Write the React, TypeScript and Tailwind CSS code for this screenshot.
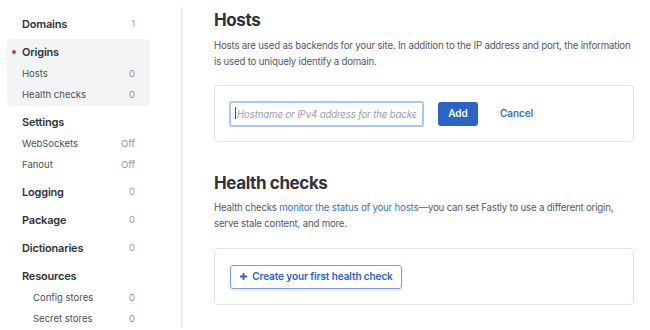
import React from 'react'

type Item = { label: string; value?: string; indent?: boolean }
type Group = { title: string; value?: string; active?: boolean; items?: Item[] }

const groups: Group[] = [
  { title: 'Domains', value: '1' },
  {
    title: 'Origins',
    active: true,
    items: [
      { label: 'Hosts', value: '0' },
      { label: 'Health checks', value: '0' },
    ],
  },
  {
    title: 'Settings',
    items: [
      { label: 'WebSockets', value: 'Off' },
      { label: 'Fanout', value: 'Off' },
    ],
  },
  { title: 'Logging', value: '0' },
  { title: 'Package', value: '0' },
  { title: 'Dictionaries', value: '0' },
  {
    title: 'Resources',
    items: [
      { label: 'Config stores', value: '0', indent: true },
      { label: 'Secret stores', value: '0', indent: true },
    ],
  },
]

function Sidebar() {
  return (
    <nav className="flex w-[181px] shrink-0 flex-col gap-[4px] pl-[7px] pr-[31px] pt-[12px]">
      {groups.map((g) => (
        <div key={g.title} className={`rounded-[4px] ${g.active ? '-mt-[1px] bg-[#f3f4f6] pt-[1px]' : ''}`}>
          <div className="relative flex h-[24px] items-center justify-between px-[15px]">
            {g.active && (
              <span className="absolute left-[5px] top-[10px] h-[4px] w-[4px] rounded-full bg-[#e5322d]" />
            )}
            <span className="text-[11px] font-semibold tracking-[-0.2px] text-[#2f343b]">{g.title}</span>
            {g.value && <span className="text-[9.5px] text-[#9aa0a6]">{g.value}</span>}
          </div>
          {g.items?.map((it) => (
            <div
              key={it.label}
              className={`flex h-[21px] items-center justify-between pr-[15px] ${it.indent ? 'pl-[26px]' : 'pl-[15px]'}`}
            >
              <span className="text-[9.5px] text-[#4b5158]">{it.label}</span>
              <span className="text-[9.5px] text-[#8d939a]">{it.value}</span>
            </div>
          ))}
        </div>
      ))}
    </nav>
  )
}

export default function App() {
  return (
    <div
      className="flex h-[330px] w-[650px] overflow-hidden bg-white"
      style={{ fontFamily: 'Inter, "Noto Sans", sans-serif' }}
    >
      <Sidebar />
      <div className="mb-[2px] mt-[7px] w-[2px] shrink-0 bg-[#eceef1]" />
      <main className="flex-1 pl-[31px] pr-[16px] pt-[8px]">
        <h2 className="text-[17px] font-bold leading-[24px] tracking-[-0.4px] text-[#2f343b]">Hosts</h2>
        <p className="mt-[6px] text-[9.7px] leading-[16px] tracking-[-0.2px] text-[#555b63]">
          Hosts are used as backends for your site. In addition to the IP address and port, the information is used to
          uniquely identify a domain.
        </p>
        <div className="mt-[15px] flex h-[57px] items-center rounded-[4px] border border-[#e1e4e8] px-[14px]">
          <div className="relative">
            <input
              className="h-[26px] w-[195px] rounded-[3px] border-2 border-[#a9c7f2] px-[6px] text-[9.7px] italic tracking-[-0.15px] text-[#4b5158] outline-none placeholder:text-[#9aa0a6]"
              placeholder="Hostname or IPv4 address for the backend"
            />
            <span className="absolute left-[6px] top-[7px] h-[12px] w-[1px] bg-[#4b5158]" />
          </div>
          <button className="ml-[14px] h-[24px] w-[40px] rounded-[3px] bg-[#2b63c9] text-[10px] font-semibold text-white">
            Add
          </button>
          <button className="ml-[22px] text-[10px] font-semibold tracking-[-0.1px] text-[#3a6fd0]">Cancel</button>
        </div>

        <h2 className="mt-[29px] text-[17px] font-bold leading-[24px] tracking-[-0.4px] text-[#2f343b]">
          Health checks
        </h2>
        <p className="mt-[5px] text-[9.7px] leading-[16px] tracking-[-0.2px] text-[#555b63]">
          Health checks <a className="text-[#3a6fd0]">monitor the status of your hosts</a>—you can set Fastly to use a
          different origin, serve stale content, and more.
        </p>
        <div className="mt-[16px] flex h-[57px] items-center rounded-[4px] border border-[#e1e4e8] px-[15px]">
          <button className="flex h-[24px] w-[172px] items-center justify-center gap-[4px] rounded-[3px] border border-[#7f9fd8] text-[10px] font-semibold tracking-[-0.1px] text-[#2b63c9] shadow-[0_1px_2px_rgba(0,0,0,0.15)]">
            <svg width="9" height="9" viewBox="0 0 10 10">
              <path d="M5 1v8M1 5h8" stroke="currentColor" strokeWidth="2" />
            </svg>
            Create your first health check
          </button>
        </div>
      </main>
    </div>
  )
}
